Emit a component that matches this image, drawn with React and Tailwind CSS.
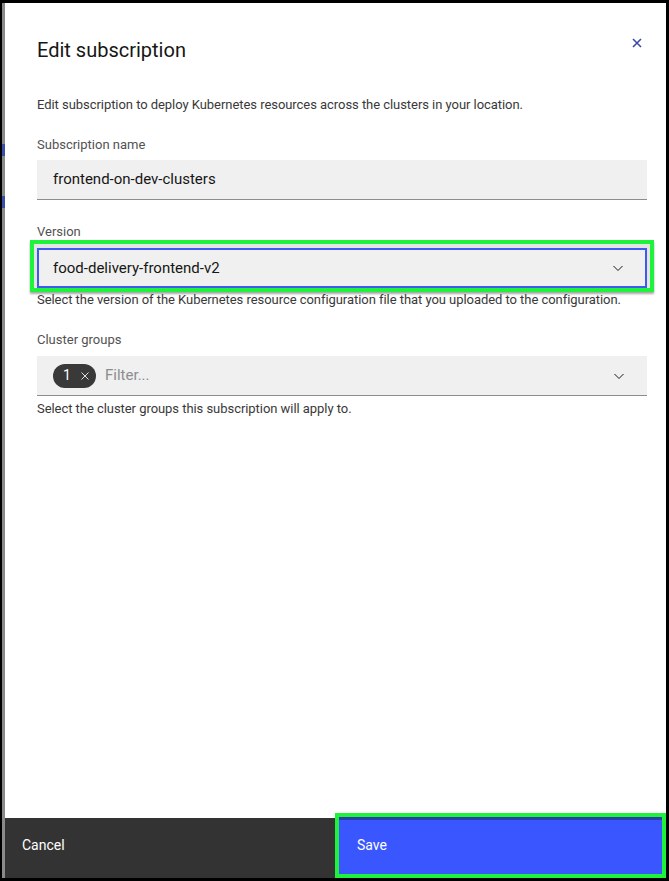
const Chevron = () => (
  <svg width="16" height="16" viewBox="0 0 16 16" fill="none">
    <path d="M3.5 6 L8 10.5 L12.5 6" stroke="#161616" strokeWidth="1" />
  </svg>
);

const App = () => {
  return (
    <div className="w-[669px] h-[881px] bg-black pt-[3px] pr-[3px] pb-[3px] pl-[2px] flex font-['Roboto',sans-serif]">
      <div className="w-[3px] bg-[#8a8a8a] flex flex-col">
        <span className="mt-[141px] h-[12px] w-[3px] bg-[#3b4fa8]" />
        <span className="mt-[40px] h-[12px] w-[3px] bg-[#3b4fa8]" />
      </div>
      <section className="flex-1 bg-white flex flex-col">
        <div className="flex-1 pl-[32px] pr-[19px]">
          <div className="flex items-start justify-between pt-[34px]">
            <h1 className="text-[20px] leading-[26px] text-[#161616]">Edit subscription</h1>
            <svg className="mt-[1px] mr-[5px]" width="10" height="10" viewBox="0 0 10 10">
              <path d="M1 1 L9 9 M9 1 L1 9" stroke="#3d4aa8" strokeWidth="1.6" />
            </svg>
          </div>
          <p className="mt-[34px] text-[13px] leading-[16px] tracking-[-0.05px] text-[#393939]">
            Edit subscription to deploy Kubernetes resources across the clusters in your location.
          </p>

          <label className="block mt-[24px] text-[13px] leading-[16px] text-[#525252]">Subscription name</label>
          <div className="mt-[7px] h-[40px] bg-[#f0f0f0] border-b border-[#8d8d8d] flex items-center px-[16px] text-[15px] text-[#161616]">
            frontend-on-dev-clusters
          </div>

          <label className="block mt-[24px] text-[13px] leading-[16px] text-[#525252]">Version</label>
          <div className="-mx-[7px] border-4 border-[#1ff23a] bg-[#e4e4e4] pt-[4px] px-[3px] shadow-[0_2px_2px_rgba(0,0,0,0.35)]">
            <div className="h-[40px] bg-[#f0f0f0] border-2 border-[#3d5af1] flex items-center justify-between pl-[14px] pr-[19px] text-[15px] text-[#161616]">
              food-delivery-frontend-v2
              <Chevron />
            </div>
          </div>
          <p className="text-[13px] leading-[16px] tracking-[-0.05px] text-[#393939]">
            Select the version of the Kubernetes resource configuration file that you uploaded to the configuration.
          </p>

          <label className="block mt-[24px] text-[13px] leading-[16px] text-[#525252]">Cluster groups</label>
          <div className="mt-[8px] h-[40px] bg-[#f0f0f0] border-b border-[#8d8d8d] flex items-center pl-[16px] pr-[20px]">
            <span className="h-[24px] w-[43px] rounded-full bg-[#393939] flex items-center gap-[9px] pl-[10px] text-[14px] text-white">
              1
              <svg width="10" height="10" viewBox="0 0 10 10">
                <path d="M1.5 1.5 L8.5 8.5 M8.5 1.5 L1.5 8.5" stroke="#e0e0e0" strokeWidth="1" />
              </svg>
            </span>
            <span className="ml-[9px] flex-1 text-[15px] text-[#8d8d8d]">Filter...</span>
            <Chevron />
          </div>
          <p className="mt-[5px] text-[13px] leading-[16px] tracking-[-0.05px] text-[#393939]">
            Select the cluster groups this subscription will apply to.
          </p>
        </div>

        <footer className="h-[60px] bg-[#333333] flex">
          <button className="w-[330px] text-left pl-[17px] pb-[6px] text-[14px] text-white">Cancel</button>
          <button className="flex-1 -mt-[5px] border-4 border-[#1ff23a] bg-[#3a56ff] text-left pl-[18px] text-[14px] text-white shadow-[inset_0_3px_0_#2a3ea8]">
            Save
          </button>
        </footer>
      </section>
    </div>
  );
};

export default App;
